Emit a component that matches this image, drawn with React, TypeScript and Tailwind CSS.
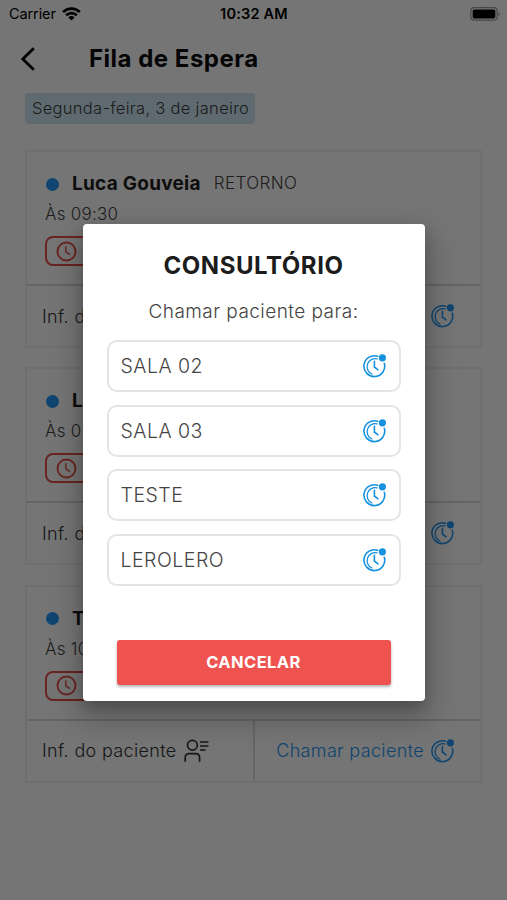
import { ReactNode } from 'react'

interface Appointment {
  id: number
  name: string
  type?: string
  time: string
  infoLabel: string
  callLabel?: string
}

const appointments: Appointment[] = [
  { id: 1, name: 'Luca Gouveia', type: 'RETORNO', time: 'Às 09:30', infoLabel: 'Inf. d' },
  { id: 2, name: 'L', time: 'Às 0', infoLabel: 'Inf. d' },
  { id: 3, name: 'T', time: 'Às 10', infoLabel: 'Inf. do paciente', callLabel: 'Chamar paciente' },
]

const rooms = ['SALA 02', 'SALA 03', 'TESTE', 'LEROLERO']

function CallIcon({ className }: { className?: string }) {
  return (
    <svg width="24" height="24" viewBox="0 0 24 24" fill="none" stroke="currentColor" strokeLinecap="round" className={className}>
      <path d="M14.6 2.3A10.4 10.4 0 1 0 21.3 9.2" strokeWidth="1.6" />
      <path d="M14 4.9A8 8 0 0 0 8.9 20" strokeWidth="1.3" />
      <path d="M11.4 7.3V13L15 15.8" strokeWidth="1.6" />
      <circle cx="19.4" cy="3.8" r="3.6" fill="currentColor" stroke="none" />
    </svg>
  )
}

function PatientIcon() {
  return (
    <svg width="25" height="24" viewBox="0 0 25 24" fill="none" stroke="currentColor" strokeWidth="1.7">
      <circle cx="8.4" cy="6.2" r="4.9" />
      <path d="M1.2 22.8V18.6Q1.2 14.6 5.2 14.6H11.6Q15.6 14.6 15.6 18.6V22.8" />
      <path d="M16 3H24.4M16 7H24.4M16 11H21.6" strokeWidth="1.6" />
    </svg>
  )
}

function ClockIcon() {
  return (
    <svg width="21" height="21" viewBox="0 0 21 21" fill="none" stroke="currentColor" strokeWidth="1.9" strokeLinecap="round">
      <circle cx="10.5" cy="10.5" r="9" />
      <path d="M9.8 5.8V10.8L13.6 13.4" strokeWidth="1.5" />
    </svg>
  )
}

function StatusBar() {
  return (
    <div className="grid h-7 grid-cols-3 items-center pl-[9px] pr-[6px] text-black">
      <div className="flex items-center gap-[6px]">
        <span className="text-[14.5px] tracking-[-0.1px]">Carrier</span>
        <svg width="19" height="14" viewBox="0 0 19 14" fill="none" stroke="currentColor" strokeWidth="2.6">
          <path d="M1.1 5.1A12 12 0 0 1 17.9 5.1" />
          <path d="M4.1 8.3A7.7 7.7 0 0 1 14.9 8.3" />
          <path d="M9.5 13.6L6.4 10.4A4.4 4.4 0 0 1 12.6 10.4Z" fill="currentColor" stroke="none" />
        </svg>
      </div>
      <span className="-ml-0.5 text-center text-[14.5px] font-semibold tracking-[0.2px]">10:32 AM</span>
      <div className="flex justify-end">
        <svg width="31" height="15" viewBox="0 0 31 15">
          <rect x="0.8" y="0.6" width="26.4" height="12.6" rx="3.4" fill="none" stroke="#000" strokeOpacity="0.4" strokeWidth="1.2" />
          <rect x="2.7" y="2.4" width="22.6" height="9" rx="1.6" />
          <path d="M28.6 4.7Q31 7 28.6 9.3Z" fillOpacity="0.45" />
        </svg>
      </div>
    </div>
  )
}

function AppointmentCard({ appointment }: { appointment: Appointment }) {
  return (
    <div className="flex h-[198px] flex-col border-2 border-[#eff1f2]">
      <div className="h-[132px] px-[18px] pt-[19px]">
        <div className="flex h-[26px] items-center">
          <span className="ml-px h-[13px] w-[13px] rounded-full bg-[#2196f3]" />
          <span className="ml-[13px] text-[19px] font-bold tracking-[0.25px] text-[#1e1e1e]">{appointment.name}</span>
          {appointment.type && (
            <span className="ml-[13px] text-[17px] font-light tracking-[0.4px] text-[#444]">{appointment.type}</span>
          )}
        </div>
        <div className="flex h-[34px] items-center pt-px text-[17px] font-light tracking-[0.25px] text-[#444]">{appointment.time}</div>
        <div className="mt-[5px] flex h-[30px] w-[120px] items-center rounded-lg border-2 border-[#e6504d] pl-[9px] text-[#e6504d]">
          <ClockIcon />
        </div>
      </div>
      <div className="flex h-[62px] flex-1 border-t-2 border-[#d8dadc]">
        <div className="flex flex-1 items-center gap-[7px] border-r-2 border-[#dddfe0] pl-[15px] text-[#333]">
          <span className="whitespace-nowrap text-[18px] font-light tracking-[0.35px]">{appointment.infoLabel}</span>
          {appointment.callLabel && <PatientIcon />}
        </div>
        <div className="flex w-[225px] items-center justify-end gap-[7px] pr-[25px] text-[#2196f3]">
          {appointment.callLabel && (
            <span className="whitespace-nowrap text-[18px] font-light tracking-[0.35px]">{appointment.callLabel}</span>
          )}
          <CallIcon />
        </div>
      </div>
    </div>
  )
}

function ModalOverlay({ children }: { children: ReactNode }) {
  return <div className="absolute inset-0 flex items-start justify-center bg-black/54 pt-[224px]">{children}</div>
}

function RoomDialog() {
  return (
    <div className="flex h-[477px] w-[342px] flex-col items-center rounded bg-white px-[24px] shadow-[0_14px_30px_4px_rgba(0,0,0,0.25),0_6px_12px_rgba(0,0,0,0.15)]">
      <h2 className="mt-[26px] text-[24px] leading-8 font-bold tracking-[0.55px] text-[#1c1c1c]">CONSULTÓRIO</h2>
      <p className="mt-[16px] text-[19px] leading-7 font-light tracking-[0.45px] text-[#444]">Chamar paciente para:</p>
      <div className="mt-[14px] flex w-[294px] flex-col gap-[12.7px]">
        {rooms.map((room) => (
          <button
            key={room}
            className="flex h-[52px] items-center justify-between rounded-[10px] border-2 border-[#e4e4e4] pr-[12px] pl-[12px] text-[19.5px] font-light tracking-[0.5px] text-[#444]"
          >
            <span className="pt-px">{room}</span>
            <CallIcon className="text-[#1492e0]" />
          </button>
        ))}
      </div>
      <button className="mt-[54px] h-[45px] w-[274px] rounded-[3px] bg-[#ef5350] text-[16.5px] font-bold tracking-[0.4px] text-white shadow-[0_2px_3px_rgba(0,0,0,0.3)]">
        CANCELAR
      </button>
    </div>
  )
}

export default function App() {
  return (
    <div className="relative h-[900px] w-[507px] overflow-hidden bg-white font-[Inter,sans-serif]">
      <StatusBar />
      <header className="flex h-[62px] items-center pl-[20px]">
        <svg width="16" height="24" viewBox="0 0 16 24" fill="none" stroke="#000" strokeWidth="2.8">
          <path d="M13.8 1.2L2.8 12L13.8 22.8" />
        </svg>
        <h1 className="ml-[53px] text-[24px] font-bold tracking-[0.5px] text-[#0a0a0a]">Fila de Espera</h1>
      </header>
      <main className="px-[25px] pt-[3px]">
        <div className="flex h-[31px] w-[230px] items-center rounded bg-[#cfe8f3] pl-[7px] text-[16.5px] font-light tracking-[0.3px] whitespace-nowrap text-[#3c3c3c]">
          Segunda-feira, 3 de janeiro
        </div>
        <div className="mt-[26px] flex flex-col gap-[19.4px]">
          {appointments.map((appointment) => (
            <AppointmentCard key={appointment.id} appointment={appointment} />
          ))}
        </div>
      </main>
      <ModalOverlay>
        <RoomDialog />
      </ModalOverlay>
    </div>
  )
}
